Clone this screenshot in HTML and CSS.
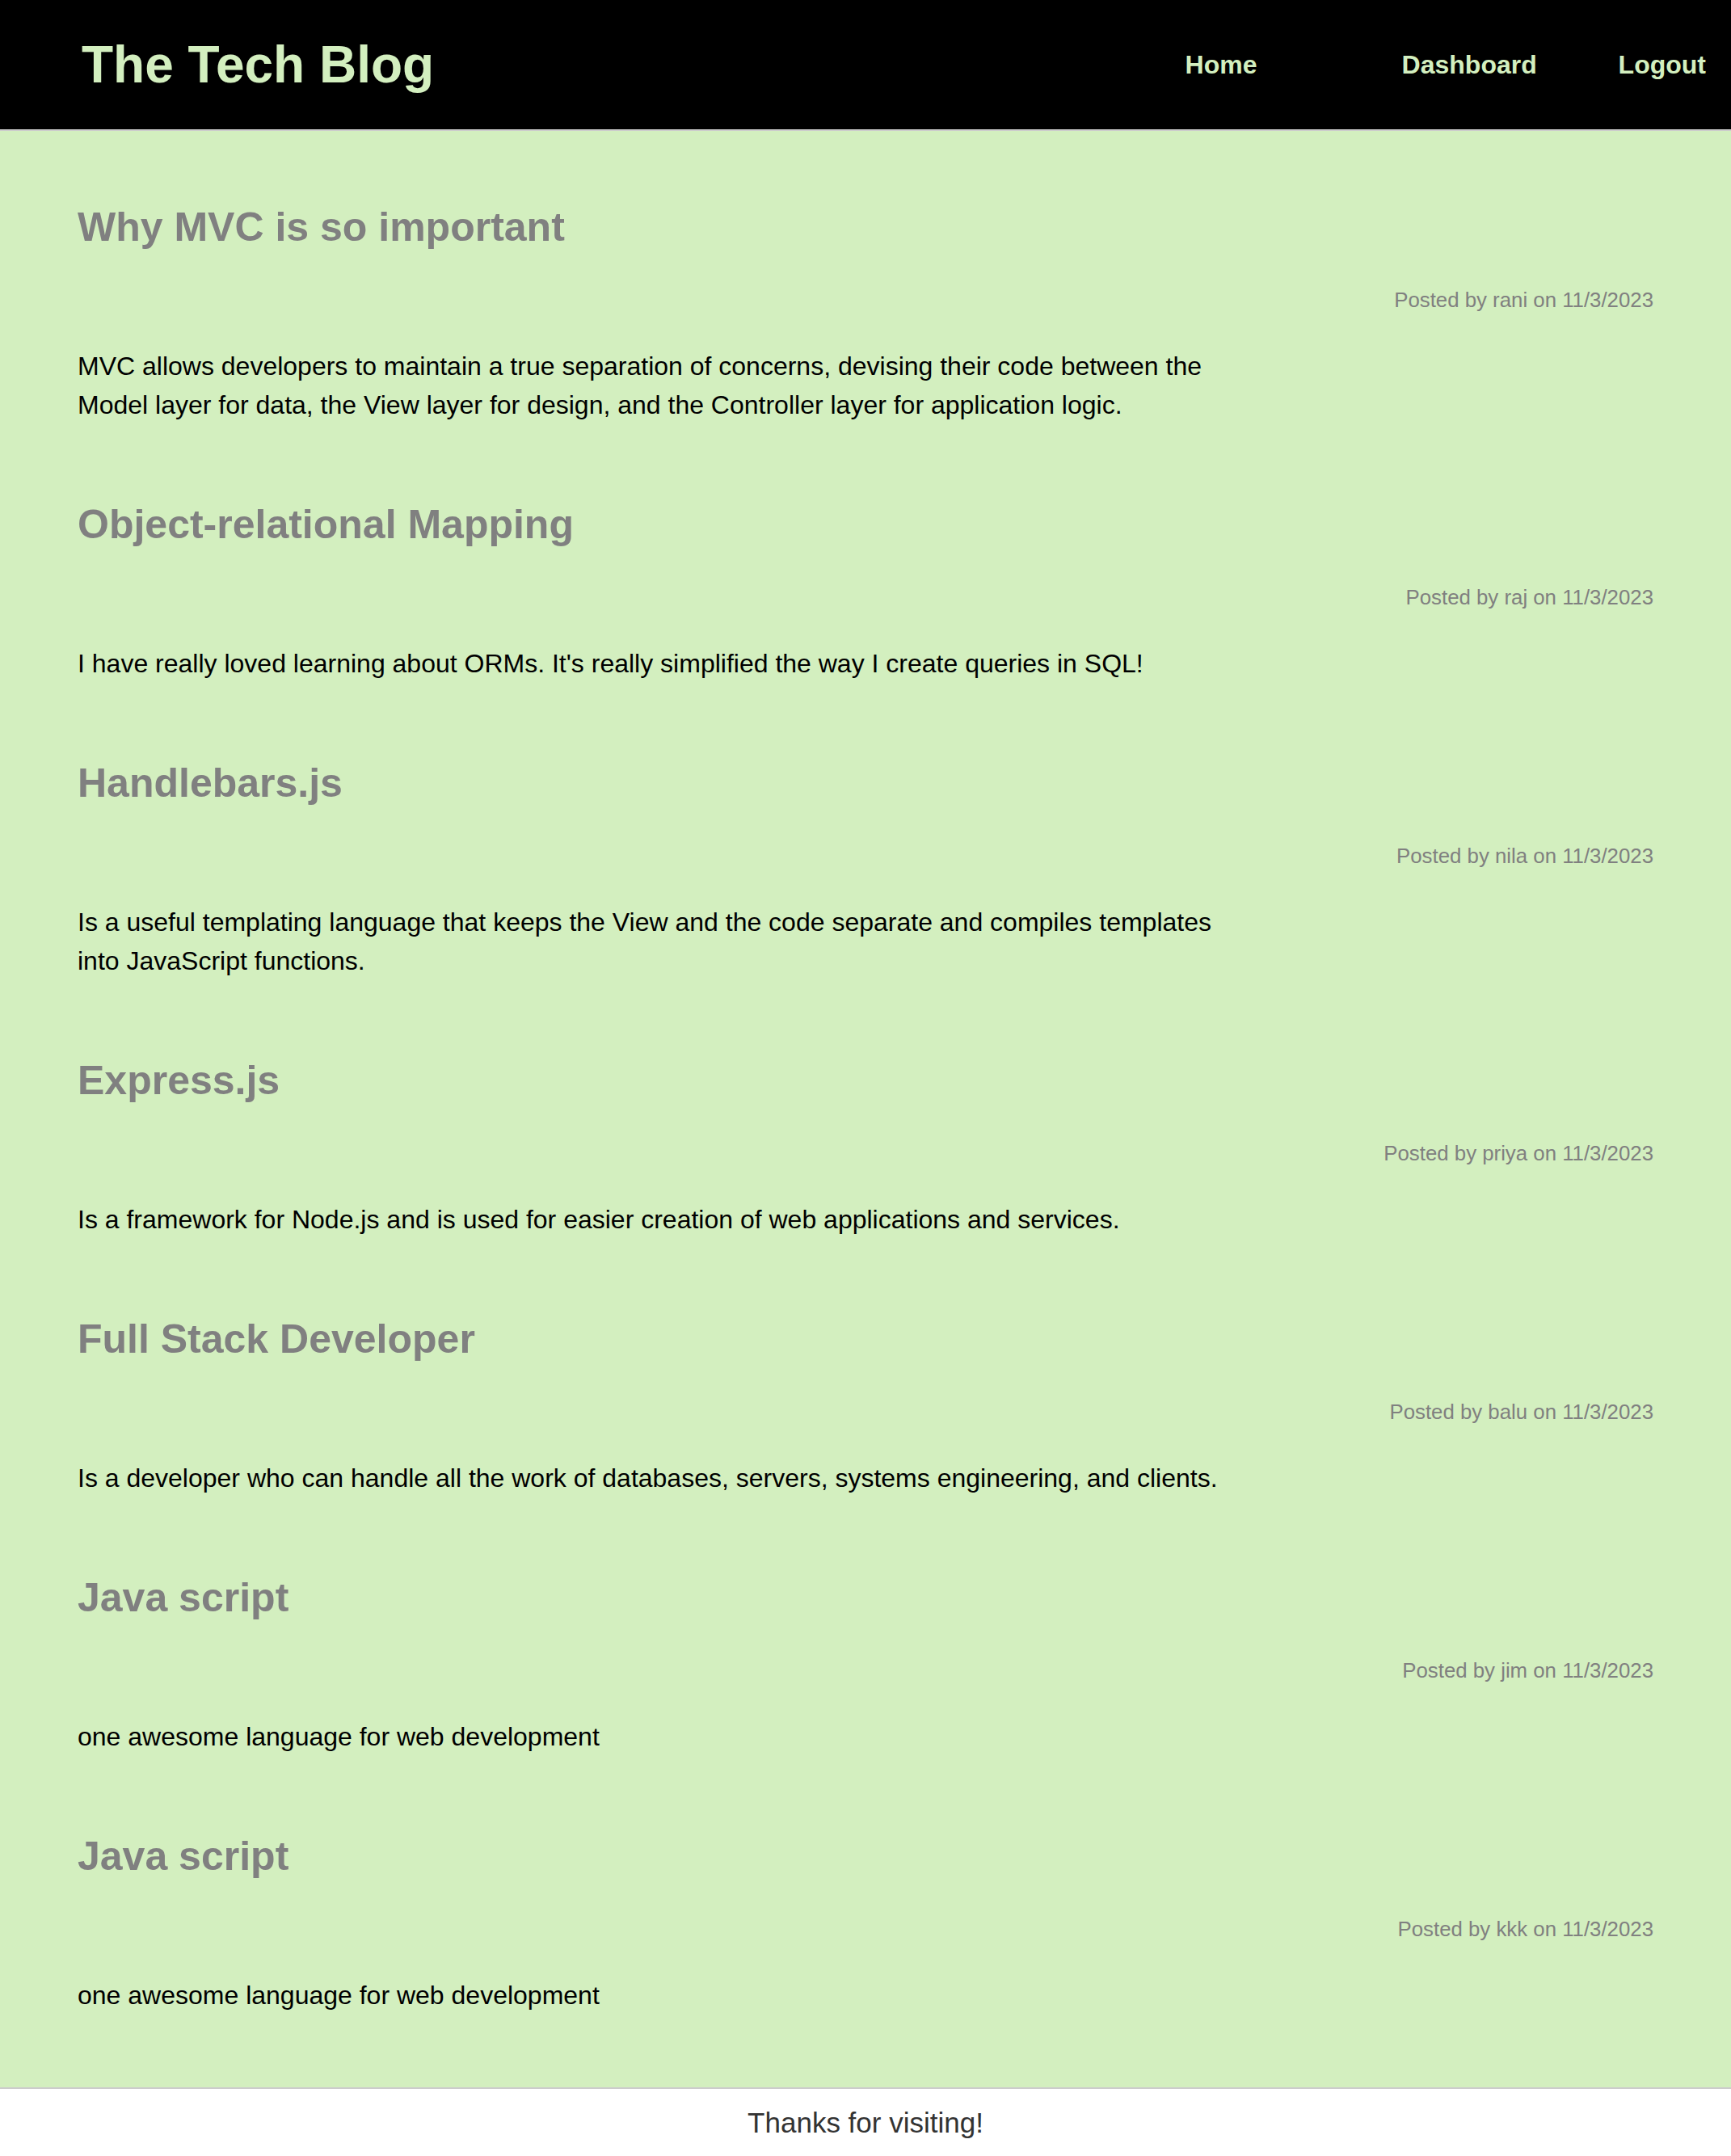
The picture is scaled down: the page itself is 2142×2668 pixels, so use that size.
FILE: index.html
```html
<!DOCTYPE html>
<html lang="en">
<head>
<meta charset="utf-8">
<title>The Tech Blog</title>
<link rel="stylesheet" href="styles.css">
</head>
<body>
<header class="site-header">
  <h1 class="brand">The Tech Blog</h1>
  <nav class="nav">
    <a class="nav-link" href="#">Home</a>
    <a class="nav-link" href="#">Dashboard</a>
    <a class="nav-link" href="#">Logout</a>
  </nav>
</header>
<main class="posts">
  <article class="post">
    <h2 class="post-title">Why MVC is so important</h2>
    <p class="post-meta">Posted by rani on 11/3/2023</p>
    <p class="post-body">MVC allows developers to maintain a true separation of concerns, devising their code between the Model layer for data, the View layer for design, and the Controller layer for application logic.</p>
  </article>
  <article class="post">
    <h2 class="post-title">Object-relational Mapping</h2>
    <p class="post-meta">Posted by raj on 11/3/2023</p>
    <p class="post-body">I have really loved learning about ORMs. It's really simplified the way I create queries in SQL!</p>
  </article>
  <article class="post">
    <h2 class="post-title">Handlebars.js</h2>
    <p class="post-meta">Posted by nila on 11/3/2023</p>
    <p class="post-body">Is a useful templating language that keeps the View and the code separate and compiles templates into JavaScript functions.</p>
  </article>
  <article class="post">
    <h2 class="post-title">Express.js</h2>
    <p class="post-meta">Posted by priya on 11/3/2023</p>
    <p class="post-body">Is a framework for Node.js and is used for easier creation of web applications and services.</p>
  </article>
  <article class="post">
    <h2 class="post-title">Full Stack Developer</h2>
    <p class="post-meta">Posted by balu on 11/3/2023</p>
    <p class="post-body">Is a developer who can handle all the work of databases, servers, systems engineering, and clients.</p>
  </article>
  <article class="post">
    <h2 class="post-title">Java script</h2>
    <p class="post-meta">Posted by jim on 11/3/2023</p>
    <p class="post-body">one awesome language for web development</p>
  </article>
  <article class="post">
    <h2 class="post-title">Java script</h2>
    <p class="post-meta">Posted by kkk on 11/3/2023</p>
    <p class="post-body">one awesome language for web development</p>
  </article>
</main>
<footer class="site-footer">Thanks for visiting!</footer>
</body>
</html>
```
FILE: styles.css
```css
* { box-sizing: border-box; }

html, body {
  margin: 0;
  padding: 0;
  background: #ffffff;
  font-family: "Liberation Sans", Arial, Helvetica, sans-serif;
}

.site-header {
  display: flex;
  align-items: center;
  justify-content: space-between;
  height: 162px;
  padding: 0 31px 0 101px;
  background: #000000;
  border-bottom: 2px solid #cccccc;
}

.brand {
  margin: 0;
  font-size: 64px;
  line-height: 1;
  font-weight: bold;
  color: #d3efbf;
}

.nav {
  display: flex;
  align-items: center;
}

.nav-link {
  width: 268px;
  font-size: 32px;
  line-height: 1;
  font-weight: bold;
  color: #d3efbf;
  text-decoration: none;
}

.nav-link:last-child {
  width: auto;
}

.posts {
  display: flex;
  flex-direction: column;
  gap: 94px;
  padding: 89px 96px 90px;
  background: #d3efbf;
}

.post-title {
  margin: 0 0 45px;
  font-size: 50px;
  line-height: 60px;
  font-weight: bold;
  color: #808080;
}

.post-meta {
  margin: 0 0 43px;
  font-size: 25.8px;
  line-height: 30px;
  color: #808080;
  text-align: right;
}

.post-body {
  margin: 0;
  max-width: 1436px;
  font-size: 32px;
  line-height: 48px;
  color: #000000;
}

.site-footer {
  padding: 22px 0;
  font-size: 35px;
  line-height: 40px;
  color: #333333;
  text-align: center;
  background: #ffffff;
  border-top: 2px solid #cccccc;
}
```
